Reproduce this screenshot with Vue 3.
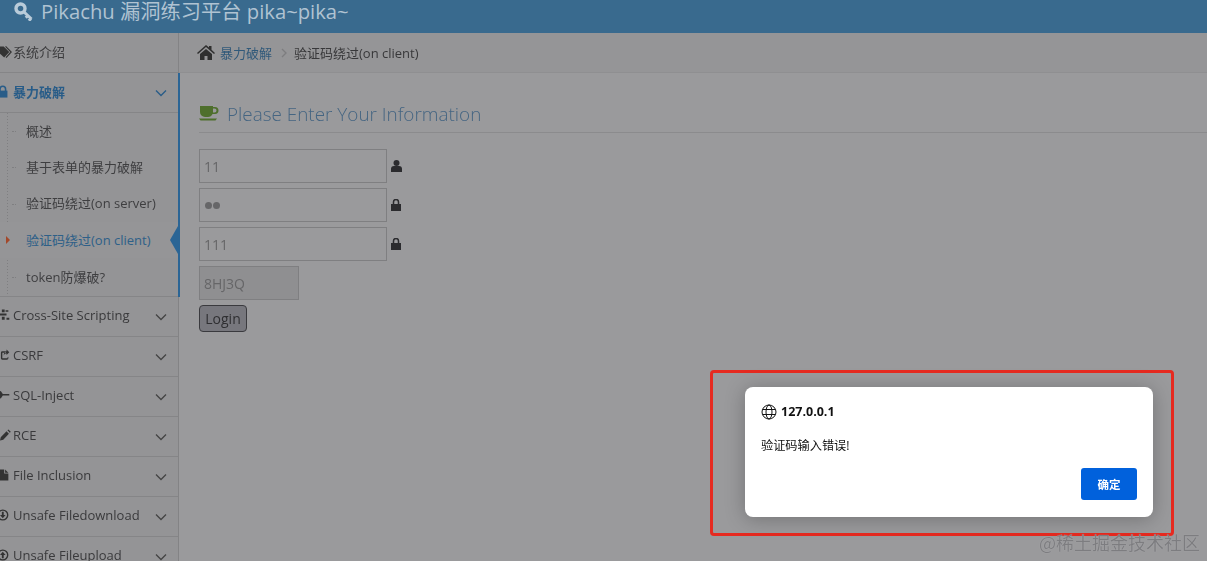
<script setup>
const subs = [
  { t: '概述', h: 36 },
  { t: '基于表单的暴力破解', h: 36 },
  { t: '验证码绕过(on server)', h: 37 },
  { t: '验证码绕过(on client)', h: 36, active: true },
  { t: 'token防爆破?', h: 38 }
]
const groups = [
  { t: 'Cross-Site Scripting', icon: 'list' },
  { t: 'CSRF', icon: 'share' },
  { t: 'SQL-Inject', icon: 'plane' },
  { t: 'RCE', icon: 'pencil' },
  { t: 'File Inclusion', icon: 'file' },
  { t: 'Unsafe Filedownload', icon: 'down' },
  { t: 'Unsafe Fileupload', icon: 'up' }
]
</script>

<template>
  <div class="page">
    <div class="dim">
      <header class="top">
        <svg class="key" width="20" height="19" viewBox="0 0 20 19">
          <circle cx="6.500" cy="6.500" r="4.500" fill="none" stroke="#b9cbd9" stroke-width="3.400" />
          <path d="M10 10l7.500 7M14 13.500l-2.200 2.200M17 16.500l-2.200 2.200" stroke="#b9cbd9" stroke-width="3" fill="none" />
        </svg>
        <span class="brand">Pikachu 漏洞练习平台 pika~pika~</span>
      </header>
      <div class="body">
        <aside class="side">
          <div class="row">
            <svg class="ico" width="14" height="14" viewBox="0 0 14 14"><path d="M-2 1h6l6 6-5.500 6L-2 7z" fill="#333" /><path d="M6 1l6 6-5.500 6" stroke="#333" fill="none" stroke-width="1.300" /></svg>
            <span>系统介绍</span>
          </div>
          <div class="open">
            <div class="row row-open">
              <svg class="ico" width="14" height="14" viewBox="0 0 14 14"><path d="M-2 5.500h10V13H-2z" fill="#285c88" /><path d="M0 6V3.800a2.800 2.800 0 0 1 6 0V6" fill="none" stroke="#285c88" stroke-width="1.700" /></svg>
              <b>暴力破解</b>
              <svg class="chev" width="12" height="8" viewBox="0 0 12 8"><path d="M1 1.500l5 5 5-5" fill="none" stroke="#285c88" stroke-width="1.300" /></svg>
            </div>
            <ul class="subs">
              <li v-for="s in subs" :key="s.t" :class="{ on: s.active }" :style="{ height: s.h + 'px' }">
                <i class="tick"></i>
                <em v-if="s.active" class="caret"></em>
                <span>{{ s.t }}</span>
                <em v-if="s.active" class="notch"></em>
              </li>
            </ul>
          </div>
          <div v-for="g in groups" :key="g.t" class="row group">
            <svg class="ico" width="14" height="14" viewBox="0 0 14 14" fill="#333">
              <path v-if="g.icon === 'list'" d="M2 1h3v3H2zM0 5.500h7v2H0zM2 9h3v3H2zM6 2h3v1.500H6zM7 10h3v2H7z" />
              <path v-else-if="g.icon === 'share'" d="M7 3H2.500A1.500 1.500 0 0 0 1 4.500v6A1.500 1.500 0 0 0 2.500 12h5A1.500 1.500 0 0 0 9 10.500V9l-1 .8v.7H2.500v-6H6zM7 1l3 3-3 3V5.300C5.500 5.300 4.500 6 4 7.500 4 5 5 3.500 7 3.200z" />
              <path v-else-if="g.icon === 'plane'" d="M-1 2.500l2 .5 2 3h7v1.500H3L1 10.500l-2 .5z" />
              <path v-else-if="g.icon === 'pencil'" d="M0 13l.8-3.500L7 3l2.600 2.600L3.500 12zM8 2l1-1 2.600 2.600-1 1z" />
              <path v-else-if="g.icon === 'file'" d="M0 1h4.500v4.500H9V13H0zM5.500 1L9 4.500H5.500z" />
              <g v-else>
                <circle cx="3" cy="7" r="5.300" fill="none" stroke="#333" stroke-width="1.500" />
                <path :d="g.icon === 'down' ? 'M2 3.500h2V7h2L3 10.500 0 7h2z' : 'M2 10.500h2V7h2L3 3.500 0 7h2z'" />
              </g>
            </svg>
            <span>{{ g.t }}</span>
            <svg class="chev" width="12" height="8" viewBox="0 0 12 8"><path d="M1 1.500l5 5 5-5" fill="none" stroke="#444" stroke-width="1.300" /></svg>
          </div>
        </aside>
        <main class="main">
          <nav class="crumbs">
            <svg width="18" height="15" viewBox="0 0 18 15"><path d="M9 0l3 2.600V1h2.500v3.800L18 8l-1 1-8-7-8 7-1-1zM3 9l6-5 6 5v6h-4.500v-4h-3v4H3z" fill="#2f2f2f" /></svg>
            <a>暴力破解</a>
            <svg class="sep" width="6" height="10" viewBox="0 0 6 10"><path d="M1 1l4 4-4 4" fill="none" stroke="#7d7d7f" stroke-width="1.300" /></svg>
            <span>验证码绕过(on client)</span>
          </nav>
          <section class="content">
            <h2 class="title">
              <svg width="20" height="17" viewBox="0 0 20 17"><path d="M1 1h13v1h2a3 3 0 0 1 0 7h-2.500A5 5 0 0 1 9 12H6a5 5 0 0 1-5-5zM14 3.500V7.500h1.500a2 2 0 0 0 0-4z" fill="#4e6f2c" fill-rule="evenodd" /><path d="M0 13.500h18l-1.500 2h-15z" fill="#4e6f2c" /></svg>
              <span>Please Enter Your Information</span>
            </h2>
            <div class="field"><div class="input">11</div>
              <svg width="11" height="12" viewBox="0 0 11 12"><circle cx="5.500" cy="3" r="3" fill="#2b2b2e" /><path d="M0 12V9a3 3 0 0 1 3-3h5a3 3 0 0 1 3 3v3z" fill="#2b2b2e" /></svg>
            </div>
            <div class="field"><div class="input dots"><i></i><i></i></div>
              <svg width="10" height="12" viewBox="0 0 10 12"><path d="M0 5h10v7H0z" fill="#2b2b2e" /><path d="M2.500 5V3a2.500 2.500 0 0 1 5 0v2" fill="none" stroke="#2b2b2e" stroke-width="1.500" /></svg>
            </div>
            <div class="field"><div class="input">111</div>
              <svg width="10" height="12" viewBox="0 0 10 12"><path d="M0 5h10v7H0z" fill="#2b2b2e" /><path d="M2.500 5V3a2.500 2.500 0 0 1 5 0v2" fill="none" stroke="#2b2b2e" stroke-width="1.500" /></svg>
            </div>
            <div class="code">8HJ3Q</div>
            <button class="login">Login</button>
          </section>
        </main>
      </div>
    </div>

    <div class="mark"></div>
    <div class="dialog">
      <div class="origin">
        <svg width="16" height="16" viewBox="0 0 16 16" fill="none" stroke="#111" stroke-width="1">
          <circle cx="8" cy="8" r="7" /><ellipse cx="8" cy="8" rx="3" ry="7" /><path d="M1.500 5.500h13M1.500 10.500h13" />
        </svg>
        <b>127.0.0.1</b>
      </div>
      <p class="msg">验证码输入错误!</p>
      <div class="actions"><button class="ok">确定</button></div>
    </div>
    <div class="wm">@稀土掘金技术社区</div>
  </div>
</template>

<style>
html, body { margin: 0; padding: 0; background: #9a9a9c; }
</style>

<style scoped>
.page {
  position: relative;
  width: 1207px;
  height: 561px;
  overflow: hidden;
  background: #9a9a9c;
  font-family: "Open Sans", "Noto Sans CJK SC", sans-serif;
}
.dim { filter: blur(0.45px); height: 100%; }
.top {
  height: 33px;
  background: #396a8e;
  display: flex;
  align-items: flex-start;
  padding-left: 14px;
  gap: 7px;
  overflow: hidden;
}
.key { margin-top: 2px; flex: none; }
.brand {
  color: #b0c3d2;
  font-size: 20.250px;
  line-height: 23px;
  white-space: nowrap;
}
.body { display: flex; }
.side {
  width: 178px;
  flex: none;
  border-right: 1px solid #838385;
  background: #949496;
  height: 528px;
}
.row {
  box-sizing: border-box;
  height: 40px;
  padding-bottom: 2px;
  border-bottom: 1px solid #858587;
  display: flex;
  align-items: center;
  font-size: 13px;
  color: #3a3a3c;
  position: relative;
  white-space: nowrap;
}
.row.group { padding-bottom: 4px; }
.ico { width: 13px; flex: none; overflow: visible; }
.chev { position: absolute; left: 155px; top: 16px; }
.open { position: relative; box-sizing: border-box; width: 180px; border-right: 2px solid #2b6595; }
.row-open { color: #285c88; }
.row-open b { font-weight: 600; }
.subs {
  list-style: none;
  margin: 0;
  padding: 0;
  border-bottom: 1px solid #858587;
  background-image: linear-gradient(#7f7f81 50%, transparent 50%);
  background-size: 1px 3px;
  background-repeat: repeat-y;
  background-position: 7px 0;
}
.subs li {
  box-sizing: border-box;
  display: flex;
  align-items: center;
  padding: 0 0 2px 26px;
  font-size: 13px;
  color: #3e3e40;
  position: relative;
  white-space: nowrap;
}
.tick { position: absolute; left: 12px; top: 50%; width: 4px; border-top: 1px dotted #7f7f81; }
.subs li.on { color: #2e6088; background: #959597; }
.on .tick { display: none; }
.caret {
  position: absolute; left: 6px; top: 50%; margin-top: -4px;
  border-left: 4px solid #a3482a; border-top: 4px solid transparent; border-bottom: 4px solid transparent;
}
.notch {
  position: absolute; right: 0; top: 50%; margin-top: -14px;
  border-right: 8px solid #2b6595; border-top: 14px solid transparent; border-bottom: 14px solid transparent;
}
.main { flex: 1; min-width: 0; }
.crumbs {
  height: 40px;
  box-sizing: border-box;
  border-bottom: 1px solid #8f8f91;
  background: #959597;
  display: flex;
  align-items: center;
  padding-left: 18px;
  font-size: 13px;
  color: #38383a;
}
.crumbs a { color: #30597a; margin-left: 5px; }
.sep { margin: 0 7px 0 9px; }
.content { padding: 28px 0 0 20px; }
.title {
  box-sizing: border-box;
  margin: 0 0 16px;
  height: 32px;
  padding-bottom: 6px;
  display: flex;
  align-items: center;
  gap: 8px;
  border-bottom: 1px solid #8b8b8d;
  font-size: 18.900px;
  font-weight: 300;
  color: #456582;
}
.field { display: flex; align-items: center; gap: 4px; margin-bottom: 5px; }
.input, .code {
  box-sizing: border-box;
  height: 34px;
  border: 1px solid #7f7f81;
  padding-left: 4px;
  font-size: 14px;
  color: #666668;
  display: flex;
  align-items: center;
}
.input { width: 188px; }
.code { width: 100px; background: #8f8f91; margin-bottom: 5px; }
.dots { gap: 1px; padding-left: 5px; }
.dots i { width: 7px; height: 7px; border-radius: 50%; background: #666668; }
.login {
  display: block;
  width: 48px;
  height: 27px;
  padding: 0;
  border: 1px solid #3a3a3e;
  border-radius: 4px;
  background: #77777d;
  color: #2f2f32;
  font: 14px "Open Sans", sans-serif;
}
.mark {
  position: absolute;
  left: 710px;
  top: 370px;
  width: 458px;
  height: 160px;
  border: 3px solid #e62a20;
  border-radius: 4px;
}
.dialog {
  position: absolute;
  left: 745px;
  top: 387px;
  width: 408px;
  height: 130px;
  box-sizing: border-box;
  background: #fff;
  border-radius: 8px;
  box-shadow: 0 2px 20px rgba(0, 0, 0, .26);
  padding: 16px 16px;
}
.origin { display: flex; align-items: center; gap: 4px; font-size: 12.500px; color: #111; height: 17px; }
.origin b { font-weight: 700; }
.msg { margin: 17px 0 0; font-size: 12.200px; line-height: 17px; color: #111; }
.actions { display: flex; justify-content: flex-end; margin-top: 14px; }
.ok {
  width: 56px;
  height: 32px;
  border: 0;
  border-radius: 3px;
  background: #0161dc;
  color: #fff;
  font: 600 11.500px "Noto Sans CJK SC", sans-serif;
}
.wm {
  position: absolute;
  right: 7px;
  top: 531px;
  font-size: 18px;
  line-height: 22px;
  color: #7d7d80;
  text-shadow: 0 0 1px #b4b4b6;
  font-family: "Noto Sans CJK SC", sans-serif;
}
</style>
